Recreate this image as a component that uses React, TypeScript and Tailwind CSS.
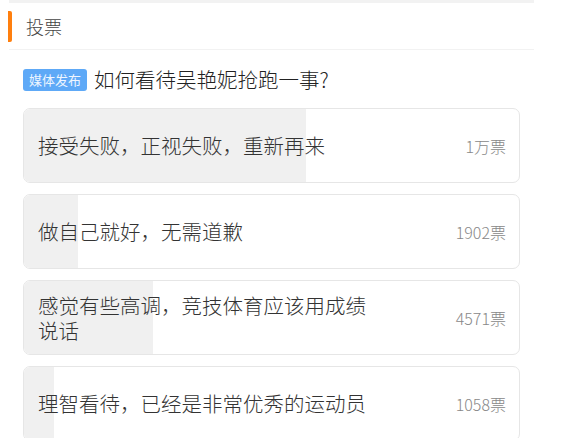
import { FC } from "react";

type Option = {
    text: string
    votes: string
    percent: number
}

const options: Option[] = [
    { text: '接受失败，正视失败，重新再来', votes: '1万票', percent: 57 },
    { text: '做自己就好，无需道歉', votes: '1902票', percent: 11 },
    { text: '感觉有些高调，竞技体育应该用成绩说话', votes: '4571票', percent: 26 },
    { text: '理智看待，已经是非常优秀的运动员', votes: '1058票', percent: 6 },
]

const cjk = { fontFamily: '"Noto Sans CJK SC", "Noto Sans", sans-serif' }

const VoteOption: FC<{ option: Option }> = ({ option }) => {
    return (
        <div className="relative h-[75px] shrink-0 rounded-[7px] border border-[#e6e6e6] overflow-hidden bg-white">
            <div className="absolute left-0 top-0 bottom-0 bg-[#f0f0f0]" style={{ width: `${option.percent}%` }} />
            <div className="relative h-full flex items-center justify-between pl-[14px] pr-[13px]">
                <span className="max-w-[340px] text-[20.5px] leading-[25px] font-light text-[#333]">{option.text}</span>
                <span className="text-[16px] font-light text-[#888]">{option.votes}</span>
            </div>
        </div>
    )
}

const App: FC = () => {
    return (
        <div className="w-[564px] h-[438px] overflow-hidden bg-white" style={cjk}>
            <div className="ml-[9px] w-[525px] h-[3px] bg-[#f2f2f2]" />
            <div className="flex items-center h-[47px] border-b border-[#f2f2f2] ml-[9px] w-[525px]">
                <div className="w-[4px] h-[31px] -ml-[1px] rounded-r-[2px] bg-[#ff7f0e]" />
                <span className="ml-[14px] text-[18px] font-light text-[#444]">投票</span>
            </div>
            <div className="flex items-center mt-[18px] ml-[23px] h-[23px]">
                <span className="flex items-center h-[22px] px-[6px] rounded-[3px] bg-[#5ea9f7] text-[13px] text-[#eef6ff] leading-none">媒体发布</span>
                <span className="ml-[7px] text-[20.5px] font-light text-[#222]">如何看待吴艳妮抢跑一事?</span>
            </div>
            <div className="flex flex-col gap-[11px] mt-[17px] ml-[23px] w-[497px]">
                {options.map((o) => (
                    <VoteOption key={o.text} option={o} />
                ))}
            </div>
        </div>
    );
}

export default App;
